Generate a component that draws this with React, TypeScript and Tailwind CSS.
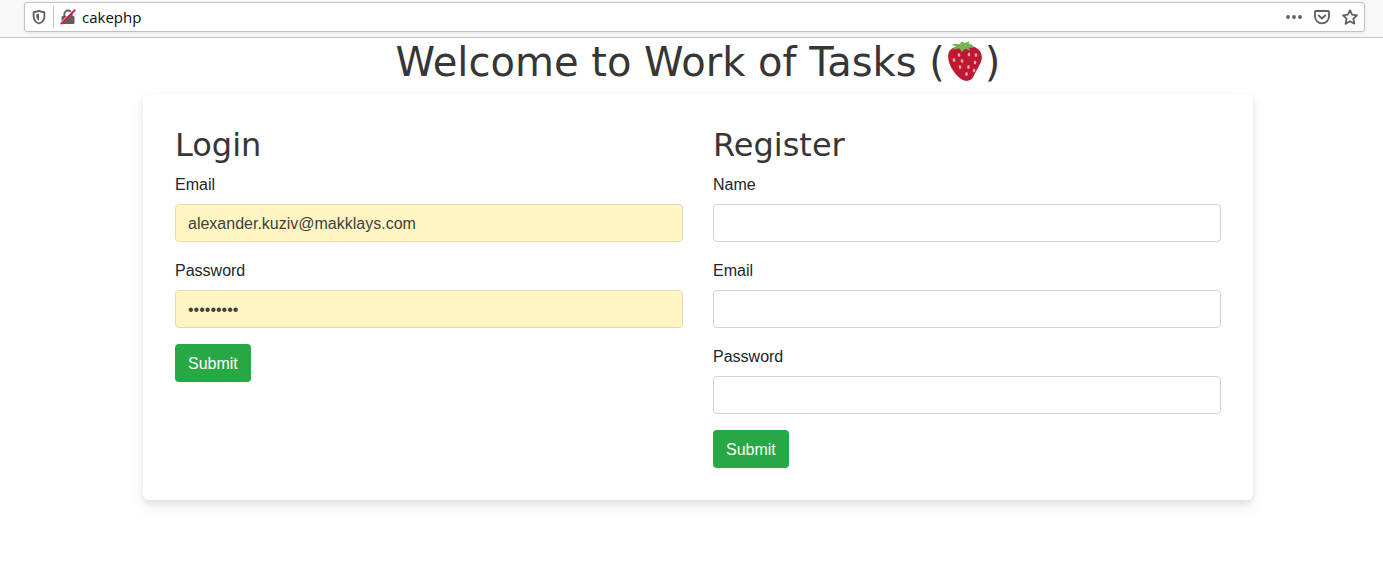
import { useId } from "react";

const seeds = [
  [11, 14], [21, 13.5], [28, 14], [6, 19], [14, 20], [27, 21.5],
  [12, 26], [20.5, 26], [26, 29.5], [18.5, 33],
];

function Strawberry() {
  return (
    <svg role="img" aria-label="Strawberry" viewBox="0 0 34 40" className="mx-[3px] mb-[2px] h-10 w-[34px]">
      <path
        d="M5 7C1.500 8.500-.1 12 .1 16c.2 5 2.500 10.500 6.400 15.500C10 36 14.500 39.900 18.500 39.900c3.300 0 5.600-1.600 7.100-4.600 1.500-3.200 2.900-6 4.600-9 1.700-2.900 3.700-6.200 3.700-10 0-6-4.700-10.600-11.200-11.100C16 4.800 9.500 5.200 5 7z"
        fill="#be1931"
      />
      <path
        d="M3.500 9.500 8 5.500 3.700 3.800c2.600-1.300 5.300-1.500 8-.5L13.500.4l3.300 1.600L21.500.3 20.500 2.700c2.600.2 4.600 1.400 6 3.800l-6 .3c1 .9 1.400 1.700 1.400 2.800L17.500 7.800 13.500 11l-1.700-3.400c-2.800.1-5.500.6-8.300 1.900z"
        fill="#77b255"
      />
      <g fill="#f4abba">
        {seeds.map(([x, y]) => (
          <ellipse key={`${x}-${y}`} cx={x} cy={y} rx="1.300" ry="1.900" transform={`rotate(${x < 16 ? -14 : 10} ${x} ${y})`} />
        ))}
      </g>
    </svg>
  );
}

function ShieldIcon() {
  return (
    <svg viewBox="0 0 16 16" className="size-4" aria-hidden="true">
      <path
        d="M8 1.900c1.800.8 3.700 1.200 5.400 1.300v4c0 3.600-1.900 6-5.400 7.300-3.500-1.300-5.400-3.700-5.400-7.300v-4C4.300 3.100 6.200 2.700 8 1.900z"
        fill="none"
        stroke="#5f5f61"
        strokeWidth="1.800"
        strokeLinejoin="round"
      />
      <path d="M8 4.500v7.200c-1.700-.9-2.700-2.400-2.700-4.600V5.300c.9-.1 1.800-.4 2.700-.8z" fill="#5f5f61" />
    </svg>
  );
}

function InsecureLockIcon() {
  return (
    <svg viewBox="0 0 16 16" className="size-4" aria-hidden="true">
      <path d="M4.400 8V5.200a3.600 3.600 0 0 1 7.200 0V8" fill="none" stroke="#5f5f61" strokeWidth="2" />
      <rect x="1.500" y="7" width="13" height="8" rx="1.200" fill="#5f5f61" />
      <path d="M.8 14.200 14.200.8" stroke="#fff" strokeWidth="1.600" />
      <path d="M1.300 14.700 14.700 1.300" stroke="#ff0039" strokeWidth="1.900" strokeLinecap="round" />
    </svg>
  );
}

function DotsIcon() {
  return (
    <svg viewBox="0 0 16 16" className="size-4" fill="#5f5f61" aria-hidden="true">
      <circle cx="2" cy="8" r="1.900" />
      <circle cx="8" cy="8" r="1.900" />
      <circle cx="14" cy="8" r="1.900" />
    </svg>
  );
}

function PocketIcon() {
  return (
    <svg viewBox="0 0 16 16" className="size-4" fill="none" stroke="#5f5f61" strokeWidth="1.800" strokeLinecap="round" strokeLinejoin="round" aria-hidden="true">
      <path d="M2 2h12a1 1 0 0 1 1 1v4.500a7 6.800 0 0 1-14 0V3a1 1 0 0 1 1-1z" />
      <path d="M4.700 6.500 8 9.500l3.300-3" />
    </svg>
  );
}

function StarIcon() {
  return (
    <svg viewBox="0 0 16 16" className="size-4" fill="none" stroke="#5f5f61" strokeWidth="1.800" strokeLinejoin="round" aria-hidden="true">
      <path d="M8 1.200l2.100 4.500 4.900.6-3.600 3.400 1 5L8 12.300l-4.400 2.400 1-5L1 6.300l4.900-.6z" />
    </svg>
  );
}

function BrowserBar() {
  return (
    <header className="border-b border-[#c4c4c5] bg-[#f8f8f9] pt-[2px] pr-[18px] pb-[5px] pl-6">
      <div className="flex h-[30px] items-center rounded-[3px] border border-[#c1c1c2] bg-white px-[6px] shadow-[0_1px_3px_rgba(0,0,0,0.08)]">
        <button type="button" aria-label="Tracking protection"><ShieldIcon /></button>
        <span className="mx-[6px] h-[22px] w-px bg-[#c8c8c8]" />
        <button type="button" aria-label="Connection not secure"><InsecureLockIcon /></button>
        <input
          aria-label="Address"
          defaultValue="cakephp"
          className="ml-[6px] min-w-0 flex-1 bg-transparent font-['Open_Sans',sans-serif] text-[15px] leading-5 text-[#0c0c0d] outline-none"
        />
        <div className="flex items-center gap-3">
          <button type="button" aria-label="Page actions"><DotsIcon /></button>
          <button type="button" aria-label="Save to Pocket"><PocketIcon /></button>
          <button type="button" aria-label="Bookmark this page"><StarIcon /></button>
        </div>
      </div>
    </header>
  );
}

type FieldProps = { label: string; type: string; value?: string };

function Field({ label, type, value }: FieldProps) {
  const id = useId();
  const tone = value
    ? "border-[#e9d9b0] bg-[#fff6c4] text-[#41403a]"
    : "border-[#ced4da] bg-white text-[#495057]";
  return (
    <div className="mb-4">
      <label htmlFor={id} className="mb-[6px] block leading-[26px] text-[#212529]">{label}</label>
      <input
        id={id}
        type={type}
        defaultValue={value}
        className={`block h-[38px] w-full rounded-[4px] border px-3 pt-[2px] outline-none ${tone}`}
      />
    </div>
  );
}

function AccountForm({ title, fields }: { title: string; fields: FieldProps[] }) {
  return (
    <form onSubmit={(e) => e.preventDefault()}>
      <h2 className="mb-2 font-['DejaVu_Sans',sans-serif] text-[32px] leading-[38px] text-[#363637]">{title}</h2>
      {fields.map((field) => (
        <Field key={field.label} {...field} />
      ))}
      <button type="submit" className="h-[38px] rounded-[4px] bg-[#28a745] px-[13px] pt-[2px] text-white">Submit</button>
    </form>
  );
}

export default function App() {
  return (
    <div className="min-h-screen bg-white font-['Liberation_Sans',sans-serif] text-base leading-6">
      <BrowserBar />
      <main className="pl-[13px]">
        <div className="mx-auto max-w-[1110px]">
          <h1 className="mb-2 flex items-center justify-center font-['DejaVu_Sans',sans-serif] text-[40px] leading-[48px] text-[#363637]">
            <span>Welcome to Work of Tasks (</span>
            <Strawberry />
            <span>)</span>
          </h1>
          <section className="grid gap-[30px] rounded-[6px] bg-white p-8 shadow-[0_7px_14px_0_rgba(60,66,87,0.1),0_3px_6px_0_rgba(0,0,0,0.07)] md:grid-cols-2">
            <AccountForm
              title="Login"
              fields={[
                { label: "Email", type: "email", value: "alexander.kuziv@makklays.com" },
                { label: "Password", type: "password", value: "password1" },
              ]}
            />
            <AccountForm
              title="Register"
              fields={[
                { label: "Name", type: "text" },
                { label: "Email", type: "email" },
                { label: "Password", type: "password" },
              ]}
            />
          </section>
        </div>
      </main>
    </div>
  );
}
